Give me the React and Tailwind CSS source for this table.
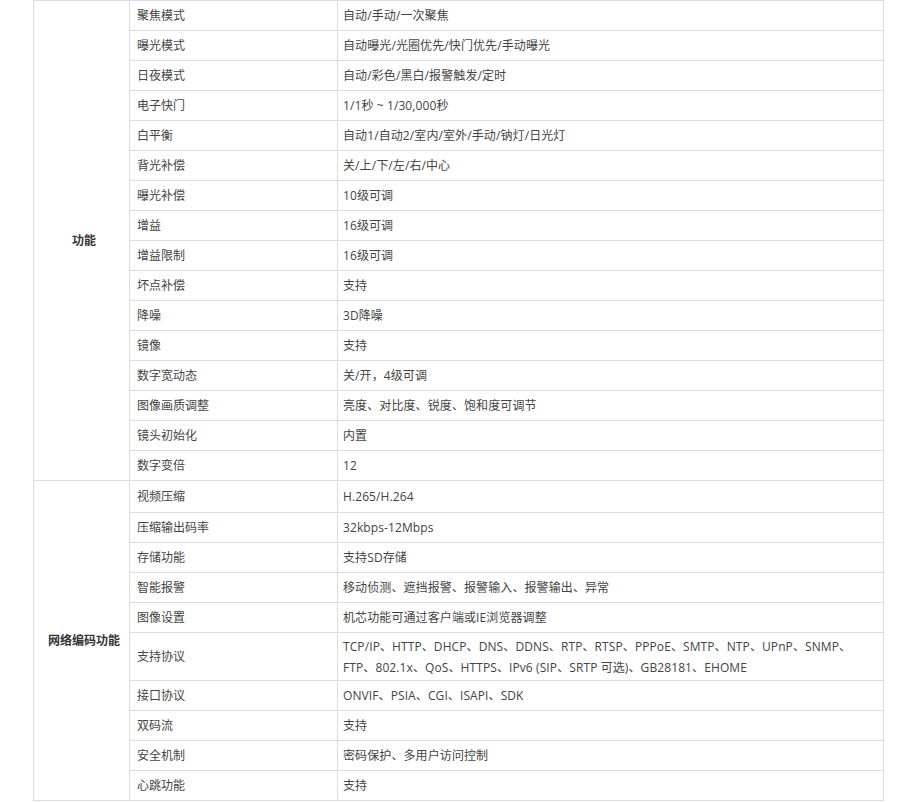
import React from "react";

const groups = [
  {
    title: "功能",
    rows: [
      ["聚焦模式", "自动/手动/一次聚焦"],
      ["曝光模式", "自动曝光/光圈优先/快门优先/手动曝光"],
      ["日夜模式", "自动/彩色/黑白/报警触发/定时"],
      ["电子快门", "1/1秒 ~ 1/30,000秒"],
      ["白平衡", "自动1/自动2/室内/室外/手动/钠灯/日光灯"],
      ["背光补偿", "关/上/下/左/右/中心"],
      ["曝光补偿", "10级可调"],
      ["增益", "16级可调"],
      ["增益限制", "16级可调"],
      ["坏点补偿", "支持"],
      ["降噪", "3D降噪"],
      ["镜像", "支持"],
      ["数字宽动态", "关/开，4级可调"],
      ["图像画质调整", "亮度、对比度、锐度、饱和度可调节"],
      ["镜头初始化", "内置"],
      ["数字变倍", "12"],
    ],
  },
  {
    title: "网络编码功能",
    rows: [
      ["视频压缩", "H.265/H.264"],
      ["压缩输出码率", "32kbps-12Mbps"],
      ["存储功能", "支持SD存储"],
      ["智能报警", "移动侦测、遮挡报警、报警输入、报警输出、异常"],
      ["图像设置", "机芯功能可通过客户端或IE浏览器调整"],
      [
        "支持协议",
        [
          "TCP/IP、HTTP、DHCP、DNS、DDNS、RTP、RTSP、PPPoE、SMTP、NTP、UPnP、SNMP、",
          "FTP、802.1x、QoS、HTTPS、IPv6 (SIP、SRTP 可选)、GB28181、EHOME",
        ],
      ],
      ["接口协议", "ONVIF、PSIA、CGI、ISAPI、SDK"],
      ["双码流", "支持"],
      ["安全机制", "密码保护、多用户访问控制"],
      ["心跳功能", "支持"],
    ],
  },
];

export default function App() {
  return (
    <div
      className="w-[914px] h-[802px] bg-white overflow-hidden text-[12px] text-[#444]"
      style={{ fontFamily: '"Open Sans", "Noto Sans CJK SC", sans-serif' }}
    >
      <table className="ml-[33px] w-[850px] border-collapse table-fixed">
        <colgroup>
          <col className="w-[96px]" />
          <col className="w-[208px]" />
          <col className="w-[546px]" />
        </colgroup>
        <tbody>
          {groups.map((g, gi) =>
            g.rows.map(([name, value], ri) => {
              const first = gi > 0 && ri === 0;
              const tall = Array.isArray(value);
              return (
                <tr
                  key={`${gi}-${ri}`}
                  className={tall ? "h-[48px]" : first ? "h-[32px]" : "h-[30px]"}
                >
                  {ri === 0 && (
                    <td
                      rowSpan={g.rows.length}
                      className="border border-[#dcdcdc] pl-[5px] text-center align-middle font-bold text-[#333]"
                    >
                      {g.title}
                    </td>
                  )}
                  <td className="border border-[#dcdcdc] px-[7px] align-middle">
                    {name}
                  </td>
                  <td className="border border-[#dcdcdc] px-[5px] align-middle leading-[21px] tracking-[0.1px]">
                    {tall ? (
                      <>
                        {value[0]}
                        <br />
                        {value[1]}
                      </>
                    ) : (
                      value
                    )}
                  </td>
                </tr>
              );
            })
          )}
        </tbody>
      </table>
    </div>
  );
}
